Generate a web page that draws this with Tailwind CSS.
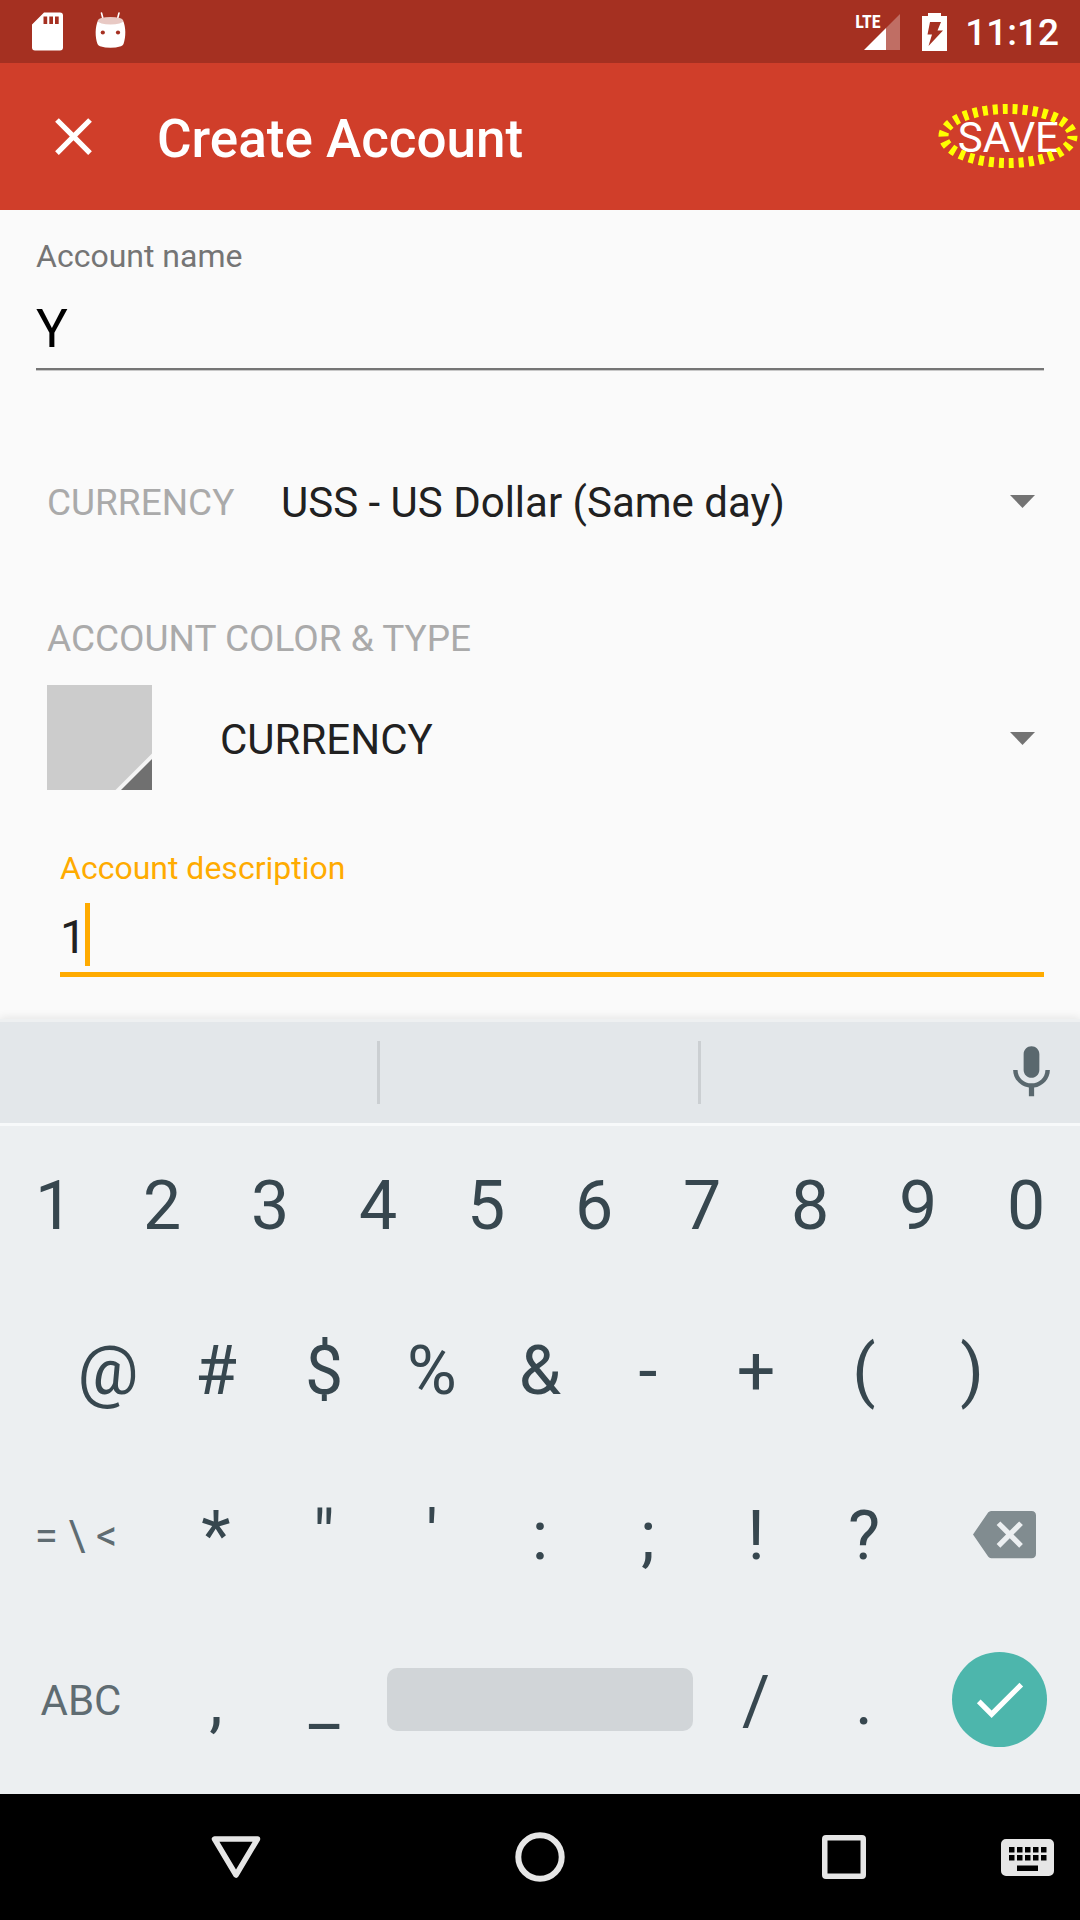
<!DOCTYPE html>
<html lang="en">
<head>
<meta charset="utf-8">
<meta name="viewport" content="width=device-width, initial-scale=1">
<title>Create Account</title>
<script src="https://cdn.jsdelivr.net/npm/@tailwindcss/browser@4"></script>
</head>
<body class="flex min-h-screen flex-col bg-[#fafafa] font-[Roboto,sans-serif] text-[#212121]">

<!-- Status bar -->
<div class="flex h-[63px] shrink-0 items-center justify-between bg-[#a53021] pr-[21px] pl-8 text-white">
  <div class="flex items-center gap-8">
    <svg class="h-[39px] w-[31px]" viewBox="0 0 31 39" fill="currentColor" aria-hidden="true">
      <path fill-rule="evenodd" d="M12 .5H28a3 3 0 0 1 3 3V35.500a3 3 0 0 1-3 3H3a3 3 0 0 1-3-3V12.500zM11.500 4.500v7.500h3.700V4.500zM17.300 4.500v7.500H21V4.500zM23 4.500v7.500h3.700V4.500z"/>
    </svg>
    <svg class="h-[41px] w-[31px]" viewBox="0 0 31 41" aria-hidden="true">
      <path d="M6.500 2L8.300 9M24 2L22.200 9" stroke="#fff" stroke-width="1.600" stroke-linecap="round"/>
      <path fill="#fff" d="M3 9.500C0 16 0 26 2.500 33Q3 34.500 5 35.200Q15.500 38.500 26 35.200Q28 34.500 28.500 33C31 26 31 16 28 9.500Z"/>
      <ellipse cx="15.500" cy="9.800" rx="12.700" ry="3.800" fill="#e8c9c4"/>
      <circle cx="7.800" cy="21.500" r="2.100" fill="#a53021"/>
      <circle cx="23" cy="21.500" r="2.100" fill="#a53021"/>
    </svg>
  </div>
  <div class="flex items-center">
    <div class="relative h-[37px] w-[45px]">
      <svg class="h-full w-full" viewBox="0 0 45 37" fill="currentColor" aria-hidden="true">
        <path d="M9 37L31 15V37z"/>
        <path fill-opacity=".3" d="M31 15L45 1V37H31z"/>
      </svg>
      <span class="absolute top-0 left-0 font-['Liberation_Sans_Narrow','Roboto_Condensed',Roboto,sans-serif] text-[18px] leading-[18px] font-bold">LTE</span>
    </div>
    <svg class="ml-[22px] h-[38px] w-[25px]" viewBox="0 0 25 38" aria-hidden="true">
      <path fill="#fff" d="M6 0H19V3H25V38H0V3H6z"/>
      <path fill="#a53021" d="M8 9H19L15.500 17.500H21L6.500 33L10 21.500H5.500z"/>
    </svg>
    <span class="ml-[18px] pt-[3px] text-[37px] leading-[44px] font-medium">11:12</span>
  </div>
</div>

<!-- App bar -->
<header class="flex h-[147px] shrink-0 items-center bg-[#d03e2a] pr-[21px] pl-[42px] text-white">
  <button type="button" aria-label="Close" class="h-[63px] w-[63px]">
    <svg class="h-full w-full" viewBox="0 0 24 24" fill="currentColor" aria-hidden="true"><path d="M19 6.410L17.590 5 12 10.590 6.410 5 5 6.410 10.590 12 5 17.590 6.410 19 12 13.410 17.590 19 19 17.590 13.410 12z"/></svg>
  </button>
  <h1 class="ml-[52px] flex-1 pt-1 text-[53px] leading-[60px] font-medium">Create Account</h1>
  <div class="relative">
    <button type="button" class="block pt-[2px] text-[42px] leading-[50px]">SAVE</button>
    <svg class="pointer-events-none absolute -top-[8px] -right-[19px] h-[66px] w-[140px]" viewBox="0 0 140 66" fill="none" aria-hidden="true">
      <ellipse cx="70" cy="33" rx="64.500" ry="27" stroke="#ff0" stroke-width="10" stroke-dasharray="5 5" stroke-dashoffset="1"/>
    </svg>
  </div>
</header>

<!-- Account form -->
<main class="flex-1 pt-[27px] pb-[42px]">
  <form>
    <div class="px-9">
      <label for="name" class="block text-[32px] leading-[38px] text-[#757575]">Account name</label>
      <input id="name" type="text" value="Y" class="block h-[95px] w-full border-b-2 border-[#757575] pt-[15px] text-[53px] text-black shadow-[0_1px_0_#c8c8c8] outline-none">
    </div>

    <div class="mt-[91px] flex h-[84px] items-center pr-9 pl-[47px]">
      <label for="currency" class="w-[234px] text-[37px] leading-[44px] text-[#aaaaaa]">CURRENCY</label>
      <div class="relative flex-1">
        <select id="currency" class="block h-[84px] w-full appearance-none pb-[2px] text-[42px] outline-none">
          <option>USS - US Dollar (Same day)</option>
        </select>
        <svg class="pointer-events-none absolute top-[34px] right-[9px] h-[13px] w-[25px]" viewBox="0 0 25 13" aria-hidden="true"><path fill="#737373" d="M0 0H25L12.500 13z"/></svg>
      </div>
    </div>

    <fieldset class="mt-[71px] pr-9 pl-[47px]">
      <legend class="text-[37px] leading-[46px] text-[#aaaaaa]">ACCOUNT COLOR &amp; TYPE</legend>
      <div class="mt-[23px] flex items-center">
        <button type="button" aria-label="Account color" class="h-[105px] w-[105px] bg-[#cccccc]">
          <svg class="h-full w-full" viewBox="0 0 105 105" aria-hidden="true">
            <path fill="#f5f5f5" d="M105 68.500V105H68.500z"/>
            <path fill="#707070" d="M105 74V105H74z"/>
          </svg>
        </button>
        <div class="relative ml-[68px] flex-1">
          <select aria-label="Account type" class="block h-[105px] w-full appearance-none pt-1 text-[42px] outline-none">
            <option>CURRENCY</option>
          </select>
          <svg class="pointer-events-none absolute top-[47px] right-[9px] h-[13px] w-[25px]" viewBox="0 0 25 13" aria-hidden="true"><path fill="#737373" d="M0 0H25L12.500 13z"/></svg>
        </div>
      </div>
    </fieldset>

    <div class="mt-[59px] pr-9 pl-[60px]">
      <label for="description" class="block text-[32px] leading-[38px] text-[#ffab00]">Account description</label>
      <div class="relative">
        <input id="description" type="text" value="1" class="block h-[90px] w-full border-b-5 border-[#ffab00] pt-[13px] text-[47px] caret-[#ffab00] outline-none">
        <span class="absolute top-[16px] left-[25px] h-[63px] w-[5px] bg-[#ffab00]"></span>
      </div>
    </div>
  </form>
</main>

<!-- On-screen keyboard -->
<section aria-label="Keyboard" class="shrink-0 bg-[#eceff1] text-[68px] leading-[80px] text-[#37474f] shadow-[0_-2px_8px_rgba(0,0,0,0.08)]">
  <div class="grid h-[104px] grid-cols-[380fr_321fr_379fr] items-center border-t-3 border-[#eef0f1] bg-[#e3e7ea]">
    <div class="h-[63px] border-r-3 border-[#cbcfd2]"></div>
    <div class="h-[63px] border-r-3 border-[#cbcfd2]"></div>
    <button type="button" aria-label="Voice input" class="mr-[17px] h-[63px] w-[63px] justify-self-end text-[#5a686e]">
      <svg class="h-full w-full" viewBox="0 0 24 24" fill="currentColor" aria-hidden="true"><path d="M12 14c1.660 0 2.990-1.340 2.990-3L15 5c0-1.660-1.340-3-3-3S9 3.340 9 5v6c0 1.660 1.340 3 3 3zm5.300-3c0 3-2.540 5.100-5.300 5.100S6.700 14 6.700 11H5c0 3.410 2.720 6.230 6 6.720V21h2v-3.280c3.280-.48 6-3.300 6-6.720h-1.700z"/></svg>
    </button>
  </div>

  <div class="pb-[11px] shadow-[inset_0_3px_0_#f7f9fa]">
    <div class="grid h-[165px] grid-cols-10">
      <button type="button">1</button>
      <button type="button">2</button>
      <button type="button">3</button>
      <button type="button">4</button>
      <button type="button">5</button>
      <button type="button">6</button>
      <button type="button">7</button>
      <button type="button">8</button>
      <button type="button">9</button>
      <button type="button">0</button>
    </div>
    <div class="grid h-[165px] grid-cols-9 px-[5%]">
      <button type="button">@</button>
      <button type="button">#</button>
      <button type="button">$</button>
      <button type="button">%</button>
      <button type="button">&amp;</button>
      <button type="button">-</button>
      <button type="button">+</button>
      <button type="button">(</button>
      <button type="button">)</button>
    </div>
    <div class="grid h-[165px] grid-cols-[3fr_2fr_2fr_2fr_2fr_2fr_2fr_2fr_3fr]">
      <button type="button" class="pr-[10px] text-[42px] text-[#5f6c72]">= \ &lt;</button>
      <button type="button">*</button>
      <button type="button">"</button>
      <button type="button">'</button>
      <button type="button">:</button>
      <button type="button">;</button>
      <button type="button">!</button>
      <button type="button">?</button>
      <button type="button" aria-label="Backspace" class="flex items-center justify-center pb-[2px] pl-[11px]">
        <svg class="h-[63px] w-[63px]" viewBox="0 0 24 24" fill="#818c90" aria-hidden="true"><path d="M22.300 3H7c-.69 0-1.080.35-1.440.88L0 12l5.560 8.110c.36.53.75.89 1.440.89h15.300c1.100 0 1.700-.6 1.700-1.700V4.700c0-1.100-.6-1.700-1.700-1.700zM19 15.590L17.590 17 14 13.410 10.410 17 9 15.590 12.590 12 9 8.410 10.410 7 14 10.590 17.590 7 19 8.410 15.410 12 19 15.590z"/></svg>
      </button>
    </div>
    <div class="grid h-[165px] grid-cols-[3fr_2fr_2fr_6fr_2fr_2fr_3fr]">
      <button type="button" class="text-[42px] text-[#5f6c72]">ABC</button>
      <button type="button">,</button>
      <button type="button">_</button>
      <button type="button" aria-label="Space" class="mx-[9px] mb-[2px] h-[63px] self-center rounded-[10px] bg-[#d1d5d8]"></button>
      <button type="button">/</button>
      <button type="button">.</button>
      <button type="button" aria-label="Done" class="mb-[2px] flex h-[95px] w-[95px] items-center justify-center self-center justify-self-center rounded-full bg-[#4db6ac] text-white">
        <svg class="h-[63px] w-[63px]" viewBox="0 0 24 24" fill="currentColor" aria-hidden="true"><path d="M9 16.200L4.800 12l-1.400 1.400L9 19 21 7l-1.400-1.400L9 16.200z"/></svg>
      </button>
    </div>
  </div>
</section>

<!-- System navigation -->
<nav aria-label="System" class="grid h-[126px] shrink-0 grid-cols-[84px_1fr_1fr_1fr_84px] items-center bg-black text-[#e6e6e6]">
  <button type="button" aria-label="Back" class="col-start-2 justify-self-center">
    <svg class="block h-[52px] w-[52px]" viewBox="0 0 52 52" fill="none" stroke="currentColor" stroke-width="5.500" stroke-linejoin="round" aria-hidden="true"><path d="M4.500 8H47.500L26 44z"/></svg>
  </button>
  <button type="button" aria-label="Home" class="justify-self-center">
    <svg class="block h-[52px] w-[52px]" viewBox="0 0 52 52" fill="none" stroke="currentColor" stroke-width="6" aria-hidden="true"><circle cx="26" cy="26" r="21.700"/></svg>
  </button>
  <button type="button" aria-label="Recent apps" class="justify-self-center">
    <svg class="block h-[44px] w-[44px]" viewBox="0 0 44 44" aria-hidden="true"><path fill="currentColor" fill-rule="evenodd" d="M4 0H40a4 4 0 0 1 4 4V40a4 4 0 0 1-4 4H4a4 4 0 0 1-4-4V4a4 4 0 0 1 4-4zM5.500 5.500V38.500H38.500V5.500z"/></svg>
  </button>
  <button type="button" aria-label="Switch keyboard" class="mr-[21px] justify-self-center">
    <svg class="block h-[37px] w-[53px]" viewBox="0 0 53 37" aria-hidden="true"><path fill="currentColor" fill-rule="evenodd" d="M5 0H48a5 5 0 0 1 5 5V32a5 5 0 0 1-5 5H5a5 5 0 0 1-5-5V5a5 5 0 0 1 5-5zM8 8v5.500h5.500V8zM16 8v5.500h5.500V8zM24 8v5.500h5.500V8zM32 8v5.500h5.500V8zM40 8v5.500h5.500V8zM8 16v5.500h5.500V16zM16 16v5.500h5.500V16zM24 16v5.500h5.500V16zM32 16v5.500h5.500V16zM40 16v5.500h5.500V16zM16 26.500V32H37V26.500z"/></svg>
  </button>
</nav>
</body>
</html>
